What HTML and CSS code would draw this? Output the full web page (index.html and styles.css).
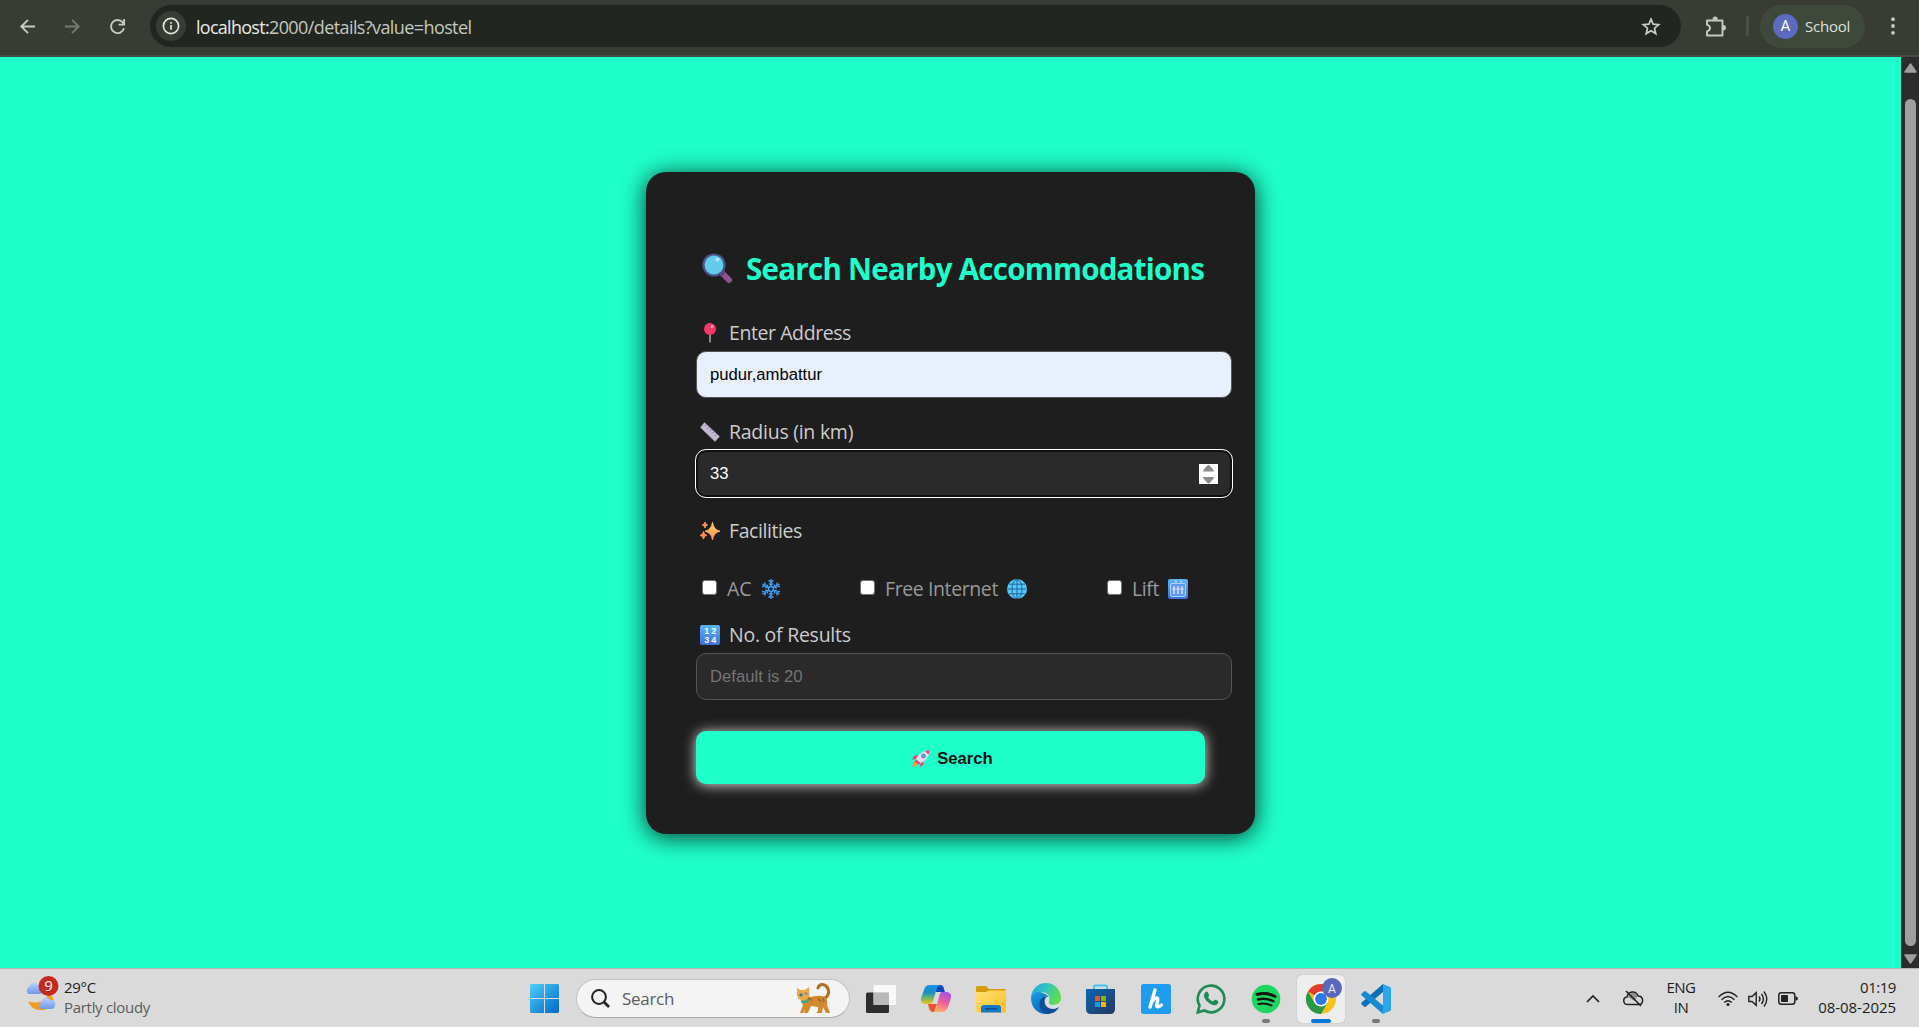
FILE: index.html
```html
<!DOCTYPE html>
<html lang="en">
<head>
<meta charset="utf-8">
<title>Search Nearby Accommodations</title>
<link rel="stylesheet" href="styles.css">
</head>
<body>
<header class="browser-bar">
  <nav class="nav-buttons">
    <svg width="15" height="15" viewBox="0 0 15 15" fill="none" stroke="#c5cbc0" stroke-width="1.9"><path d="M15 7.5H1.5M8 .8 1.3 7.5 8 14.2"/></svg>
    <svg width="15" height="15" viewBox="0 0 15 15" fill="none" stroke="#757a72" stroke-width="1.9"><path d="M0 7.5h13.5M7 .8l6.7 6.7L7 14.2"/></svg>
    <svg width="15" height="15" viewBox="0 0 15 15" fill="none" stroke="#c5cbc0" stroke-width="1.9"><path d="M14 9.2A6.6 6.6 0 1 1 12.6 3.2L14 5.2M14.1 0v5.6H8.6"/></svg>
  </nav>
  <div class="omnibox">
    <span class="site-info"><svg width="18" height="18" viewBox="0 0 18 18" fill="none" stroke="#e0e3dc" stroke-width="1.7"><circle cx="9" cy="9" r="7.6"/><path d="M9 8v4.7M9 5v1.7"/></svg></span>
    <span class="url"><span class="host">localhost:</span><span class="path">2000/details?value=hostel</span></span>
    <svg class="star" width="20" height="19" viewBox="0 0 20 19" fill="none" stroke="#c9cec5" stroke-width="1.7"><path d="m10 2.1 2.1 5 5.6.5-4.2 3.6 1.3 5.4L10 13.7l-4.8 2.9 1.3-5.4-4.2-3.6 5.600-.5z"/></svg>
  </div>
  <svg class="puzzle" width="22" height="21" viewBox="0 0 22 21"><path d="M2 4.500h15.500v15H2v-4.200c4-1 4-5.500 0-6.500z" fill="none" stroke="#c5cbc0" stroke-width="1.900" stroke-linejoin="round"/><path d="M7.500 3.800a2.600 3.300 0 0 1 5.200 0zM18 9a3 2.700 0 0 1 0 5.400z" fill="#c5cbc0"/></svg>
  <span class="divider"></span>
  <div class="profile"><span class="avatar">A</span><span class="profile-name">School</span></div>
  <svg class="kebab" width="4" height="18" viewBox="0 0 4 18" fill="#c5cbc0"><circle cx="2" cy="2.200" r="1.900"/><circle cx="2" cy="9" r="1.900"/><circle cx="2" cy="15.800" r="1.900"/></svg>
</header>

<div class="viewport">
  <main class="page">
    <form class="card">
      <h1 class="title">
        <svg width="30" height="30" viewBox="0 0 30 30"><path d="m20 20 7 7" stroke="#8c5492" stroke-width="6" stroke-linecap="round"/><path d="m18.500 18.500 3 3" stroke="#533a74" stroke-width="4"/><circle cx="12" cy="12" r="10.500" fill="#62cdeb" stroke="#4d5590" stroke-width="2.200"/><circle cx="15.500" cy="6.500" r="2" fill="#b5e4fa"/></svg>
        <span>Search Nearby Accommodations</span>
      </h1>

      <label class="field-label">
        <svg width="20" height="20" viewBox="0 0 20 20"><path d="M10 9v10.500" stroke="#9c8ba5" stroke-width="1.800"/><circle cx="10" cy="6" r="6" fill="#f8366b"/><circle cx="12" cy="3.500" r="1.400" fill="#ffa5c0"/></svg>
        <span>Enter Address</span>
      </label>
      <input class="field autofilled" type="text" value="pudur,ambattur">

      <label class="field-label loose">
        <svg width="20" height="20" viewBox="0 0 20 20"><path d="M4.500.5 19.500 14.500 15 19.500.5 5.500z" fill="#c3b9cd" stroke="#aaa0b8" stroke-width=".6"/><path d="m6.500 2.500-1.500 1.500m4 1-1.500 1.500m4 1L10 9m4 .5L12.500 11m4 1.500L15 14" stroke="#8c62bd" stroke-width="1"/></svg>
        <span>Radius (in km)</span>
      </label>
      <div class="field focused"><span>33</span>
        <svg width="19" height="20" viewBox="0 0 19 20"><path d="M0 0h19v20H0z" fill="#fff"/><path d="M9.500 1c1 0 5.500 5 5.500 6.500H4C4 6 8.500 1 9.500 1zM9.500 19.500c1 0 5.500-5 5.500-6.500H4c0 1.500 4.500 6.500 5.500 6.500z" fill="#8b8b8b"/></svg>
      </div>

      <label class="field-label">
        <svg width="20" height="20" viewBox="0 0 20 20"><defs><linearGradient id="sp" x1="0" y1="0" x2="0" y2="1"><stop offset="0" stop-color="#ffd04e"/><stop offset="1" stop-color="#ff8a6c"/></linearGradient></defs><path d="M12.500 1.500Q13.500 9 20 10.200 13.500 11.500 12.500 19 11.500 11.500 5 10.200 11.500 9 12.500 1.500z" fill="url(#sp)" stroke="url(#sp)" stroke-width="1"/><path d="M5 1q.4 2.700 2.700 3Q5.400 4.300 5 7 4.600 4.300 2.300 4 4.600 3.700 5 1zM3.500 10.500q.5 3.300 3.300 3.800-2.800.5-3.300 3.800-.5-3.300-3.300-3.800 2.800-.5 3.300-3.800z" fill="#ff9258" stroke="#ff9258"/></svg>
        <span>Facilities</span>
      </label>

      <div class="facilities">
        <label class="facility"><i class="box"></i><span class="ac">AC</span>
          <svg width="20" height="20" viewBox="0 0 20 20" fill="none" stroke="#3f9df5" stroke-width="1.400"><g id="arm"><path d="M10 8V0M7.500 1.200l2.500 2.300 2.500-2.300M8 4.500l2 1.700 2-1.700"/></g><use href="#arm" transform="rotate(60 10 10)"/><use href="#arm" transform="rotate(120 10 10)"/><use href="#arm" transform="rotate(180 10 10)"/><use href="#arm" transform="rotate(240 10 10)"/><use href="#arm" transform="rotate(300 10 10)"/><circle cx="10" cy="10" r="2.500"/></svg>
        </label>
        <label class="facility"><i class="box"></i><span>Free Internet</span>
          <svg width="20" height="20" viewBox="0 0 20 20"><circle cx="10" cy="10" r="10" fill="#54c8ff"/><g fill="none" stroke="#1b5a88" stroke-width=".9"><path d="M10 .5v19M.5 10h19M2 5.200h16M2 14.800h16"/><ellipse cx="10" cy="10" rx="5" ry="9.500"/></g></svg>
        </label>
        <label class="facility"><i class="box"></i><span>Lift</span>
          <svg width="20" height="20" viewBox="0 0 20 20"><defs><linearGradient id="bl" x1="0" y1="0" x2="0" y2="1"><stop offset="0" stop-color="#5bb5fa"/><stop offset="1" stop-color="#3d70dc"/></linearGradient></defs><rect width="20" height="20" rx="2" fill="url(#bl)"/><rect x="2.500" y="4.500" width="15" height="13" rx="1.500" fill="#5b9cf0" stroke="#a9d0ff"/><path d="M6 7v8M10 7v8M14 7v8M4.500 10h3M8.500 10h3M12.500 10h3M7 2.500h2M12 2.500h2" stroke="#dcd9ff" stroke-width="1.500"/></svg>
        </label>
      </div>

      <label class="field-label loose">
        <svg width="20" height="20" viewBox="0 0 20 20"><rect width="20" height="20" rx="2" fill="url(#bl)"/><g class="digits"><text x="4.300" y="8.800">1</text><text x="11.300" y="8.800">2</text><text x="4.300" y="17.800">3</text><text x="11.300" y="17.800">4</text></g></svg>
        <span>No. of Results</span>
      </label>
      <input class="field results" type="text" placeholder="Default is 20">

      <button class="search-button" type="button">
        <svg width="18" height="17" viewBox="0 0 18 17"><path d="m6 5-4 1-2 3.500 4-.5M12 11l-1 4-3 2 .5-4z" fill="#ee3d70"/><path d="M3 11c-2 1-2.500 4-2.500 6 2 0 4-1 5-3z" fill="#ff9440"/><path d="M17.500.3C12 .3 6.500 4 3.500 10.500L7.500 14C14 11 17.500 6 17.500.3z" fill="#e7dfee"/><path d="M17.500.3q-2.500 0-4.500 1l3.500 3.200q1-2 1-4.200zM4.200 9.200l4.500 4-2 1.300L3 11.500z" fill="#e8416f"/><circle cx="11.500" cy="6" r="2" fill="#67a6f0" stroke="#5873a8" stroke-width=".8"/></svg>
        <span>Search</span>
      </button>
    </form>
  </main>
  <aside class="scrollbar">
    <svg width="13" height="10" viewBox="0 0 13 10"><path d="M6.500 1 12 9H1z" fill="#9f9f9f" stroke="#9f9f9f" stroke-linejoin="round" stroke-width="1.500"/></svg>
    <span class="thumb"></span>
    <svg width="13" height="10" viewBox="0 0 13 10"><path d="M6.500 9 12 1H1z" fill="#9f9f9f" stroke="#9f9f9f" stroke-linejoin="round" stroke-width="1.500"/></svg>
  </aside>
</div>

<footer class="taskbar">
  <div class="weather">
    <svg width="34" height="35" viewBox="0 0 34 35"><defs><linearGradient id="cl" x1="0" y1="0" x2="0" y2="1"><stop offset="0" stop-color="#b9d3fb"/><stop offset="1" stop-color="#6f98e6"/></linearGradient></defs><path d="M23 19c5 0 6 4 5 8-3 6-9 8-14 7-5 0-9-4-11-9 6 3 16 2 20-6z" fill="#f39a1f"/><path d="M4 18a3.800 3.800 0 0 1 0-7c1-5 7-6 9-2 4-1 6 3 5 6-.3 2-2 3-4 3z" fill="url(#cl)"/><path d="M16 33a3.800 3.800 0 0 1 0-7c1-5 7-6 9-2 4-1 6 3 5 6-.3 2-2 3-4 3z" fill="url(#cl)"/><circle cx="23.500" cy="10" r="10" fill="#c42b1c"/><text class="count" x="23.500" y="15.300">9</text></svg>
    <div class="weather-text"><span>29°C</span><span class="muted">Partly cloudy</span></div>
  </div>
  <svg class="start" width="29" height="29" viewBox="0 0 29 29"><defs><linearGradient id="wn" x1="0" y1="0" x2="1" y2="1"><stop offset="0" stop-color="#4cd0fb"/><stop offset="1" stop-color="#0067c9"/></linearGradient></defs><path d="M1 0h13v14H0V1zM15 0h13l1 1v13H15zM0 15h14v14H1l-1-1zM15 15h14v13l-1 1H15z" fill="url(#wn)"/></svg>
  <div class="search-pill">
    <svg width="19" height="19" viewBox="0 0 19 19" fill="none" stroke="#222" stroke-width="2"><circle cx="8" cy="8" r="6.900"/><path d="m13 13 5 5" stroke-width="2.600"/></svg>
    <span class="pill-text">Search</span>
    <svg class="cat" width="37" height="31" viewBox="0 0 37 31"><path d="M29 16c6-2 7-8 4-12-3-4-8-3-9 1" fill="none" stroke="#b46e1d" stroke-width="3" stroke-linecap="round"/><path d="M10 14c6 1 12-2 18-1 5 1 6 5 5 9l3 8h-4l-3-6-1 6h-6l2-2v-4l-7-1-3 7h-4l1-4-2 4H6l3-8c-2-3-2-6 1-8z" fill="#d28a2e"/><path d="M3 4.500 6 7h5l4-3 .5 8c0 4-4 5.500-7 5-4 0-6-2.500-5.500-5z" fill="#efa847"/><path d="m14 15 4 2M24 15l3 4M29 15l1 4" stroke="#a8651a" stroke-width="1.500"/><circle cx="7" cy="12" r="1.700" fill="#367e9d"/><circle cx="12" cy="10.500" r="1.300" fill="#4b9aae"/><path d="M7 18q5 3 8-2" fill="none" stroke="#22aaa3" stroke-width="1.800"/><path d="m0 13 4 1M0 16l4-1" stroke="#fff"/></svg>
  </div>
  <div class="apps">
    <span class="app"><svg width="30" height="30" viewBox="0 0 30 30"><rect y="8.500" width="23" height="20.500" rx="1.500" fill="#2d2d2d"/><rect x="7.500" y="1" width="22.500" height="20" rx="1.500" fill="#fff" fill-opacity=".82"/><path d="M7.500 8.500H23V21H7.500z" fill="#b9b9b9"/></svg></span>
    <span class="app"><svg width="30" height="30" viewBox="0 0 30 30"><defs><linearGradient id="c1" x1=".3" y1="0" x2=".3" y2="1"><stop offset="0" stop-color="#1593e8"/><stop offset=".4" stop-color="#188fc5"/><stop offset=".7" stop-color="#73b763"/><stop offset="1" stop-color="#f2c318"/></linearGradient><linearGradient id="c2" x1=".7" y1="0" x2=".4" y2="1"><stop offset="0" stop-color="#a551e8"/><stop offset=".5" stop-color="#ec5d9c"/><stop offset="1" stop-color="#ffab6b"/></linearGradient></defs><path d="M14 1h6q2 0 3 4l1 3h-9z" fill="#1745bd"/><path d="M7 20h9l-3 8h-1q-3 0-4-4z" fill="#ee5330"/><path d="M9 1h10q-3 1-4 6l-3 10q-1 3-4 3H4q-5-1-4-6l3-8q1-5 6-5z" fill="url(#c1)"/><path d="M21 8h5q5 1 4 6l-3 9q-2 5-6 5h-9q2 0 3-4l3-11q1-5 3-5z" fill="url(#c2)"/></svg></span>
    <span class="app"><svg width="30" height="30" viewBox="0 0 30 30"><defs><linearGradient id="fo" x1="0" y1="0" x2="1" y2="1"><stop offset="0" stop-color="#ffe078"/><stop offset="1" stop-color="#fcbd22"/></linearGradient></defs><path d="M0 3.500Q0 2 1.500 2H10l3 3h15.500Q30 5 30 6.500V10H0z" fill="#d99b0b"/><path d="M0 8h10l3-1.500h17V27.500q0 1-1 1H1q-1 0-1-1z" fill="url(#fo)"/><path d="M5 28.500V24q0-3 3-3h14q3 0 3 3v4.500z" fill="#1478c8"/><path d="M9 24.800h12" stroke="#0a4f91" stroke-width="1.500"/></svg></span>
    <span class="app"><svg width="30" height="30" viewBox="0 0 30 30"><defs><linearGradient id="e1" x1="0" y1="0" x2="1" y2=".4"><stop offset="0" stop-color="#1ba5de"/><stop offset=".5" stop-color="#2fc4c4"/><stop offset="1" stop-color="#5fdc4e"/></linearGradient><linearGradient id="e2" x1="0" y1="0" x2=".7" y2="1"><stop offset="0" stop-color="#1b9de2"/><stop offset="1" stop-color="#075db5"/></linearGradient></defs><path d="M0 14A15 15 0 0 1 30 14c0 5-4 7-8 7-3 0-5-1-4-3 2-6-2-10-8-10-5 0-8 3-10 6z" fill="url(#e1)"/><path d="M0 14C2 8 8 7 12 9c3 1 5 3 5 4-6-1-6 9-1 12 4 3 9 1 12-2C25 28 20 30 15 30 7 30 0 24 0 14z" fill="url(#e2)"/><path d="M12 13c-6 5-4 14 3 17 6 0 10-2 13-7-3 2-8 3-12 0-3-3-3-7-1-10z" fill="#0c4f96"/><path d="M18 18c-1 2 1 3 4 3 3 0 6-1 7-3-1 3-2 5-3 6-5 2-12-2-11-7 0-3 3-4 3 1z" fill="#d9dfe2"/></svg></span>
    <span class="app"><svg width="30" height="30" viewBox="0 0 30 30"><defs><linearGradient id="st" x1="0" y1="0" x2="1" y2="1"><stop offset="0" stop-color="#0a67b5"/><stop offset="1" stop-color="#26365f"/></linearGradient></defs><path d="M8 7V3q0-1.500 1.500-1.500h10Q21 1.500 21 3v4" fill="none" stroke="#40c6ef" stroke-width="2"/><path d="M0 5h29v20q0 5-5 5H5q-5 0-5-5z" fill="url(#st)"/><path d="M9 12h5v5H9z" fill="#f25022"/><path d="M15 12h5v5h-5z" fill="#7fba00"/><path d="M9 18h5v5H9z" fill="#00a4ef"/><path d="M15 18h5v5h-5z" fill="#ffb900"/></svg></span>
    <span class="app"><svg width="30" height="30" viewBox="0 0 30 30"><rect width="30" height="30" rx="2.500" fill="#1f9bf0"/><path d="M14 6q-2 7-5 17M9.500 21q3-7 6-7c3 0 0 6 0 8q1 2 5-1" fill="none" stroke="#fff" stroke-width="3.400" stroke-linecap="round" stroke-linejoin="round"/></svg></span>
    <span class="app"><svg width="30" height="30" viewBox="0 0 30 30"><path d="M1.800 28.300 3.500 21.500A13.300 13.300 0 1 1 8.500 26.500z" fill="none" stroke="#1f8b54" stroke-width="2.600"/><path d="M10 8q1-1 2 .5l1 2.500q.3 1-1 2.200 2 3.300 5 4.300l1.500-1.700q.7-.5 3.500 1.200 1 1-.5 3-2.500 2.500-7 0Q9 16.500 8 12.500q-.5-3 2-4.500z" fill="#1f8b54"/></svg></span>
    <span class="app running"><svg width="30" height="30" viewBox="0 0 30 30"><circle cx="15" cy="15" r="14.300" fill="#1ed760"/><g fill="none" stroke="#101510" stroke-linecap="round"><path d="M6 10.500q10-2.500 18 2" stroke-width="3"/><path d="M7 15.500q8-2 15.500 1.800" stroke-width="2.400"/><path d="M7.500 20q7-1.500 13 1.500" stroke-width="2"/></g></svg></span>
    <span class="app active"><svg width="36" height="36" viewBox="0 -6 36 36"><circle cx="15" cy="15" r="15" fill="#fbc116"/><path d="M15 15 2 7.500A15 15 0 0 1 28 7.500H15z" fill="#e33b2e"/><path d="M2 7.500A15 15 0 0 0 15 30l6.500-11.300L15 15 8.500 18.700z" fill="#279847"/><circle cx="15" cy="15" r="7.500" fill="#fff"/><circle cx="15" cy="15" r="5.900" fill="#2f78ec"/><circle cx="26" cy="4" r="10" fill="#5b67b8"/><text class="badge-letter" x="26" y="8.500">A</text></svg></span>
    <span class="app running"><svg width="30" height="30" viewBox="0 0 30 30"><path d="M22 0v8L5 22.500q-1 .8-2 0L.7 20.500q-1-1 0-2z" fill="#0871b8"/><path d="M.7 11.500q-1-1 0-2L3 7.500q1-.8 2 0L22 21.500V30z" fill="#168bd2"/><path d="M22 0l7 3q1 .5 1 1.500v21q0 1-1 1.500l-7 3q-1 0-1.500-1L22 27z" fill="#2ba5ee"/></svg></span>
  </div>
  <div class="tray">
    <svg width="14" height="9" viewBox="0 0 14 9" fill="none" stroke="#222" stroke-width="1.700"><path d="M1 8l6-6 6 6"/></svg>
    <svg class="cloud" width="21" height="17" viewBox="0 0 21 17"><path d="M5 14.500C-.5 14.500-.5 7.500 4 7 5 1 13 0 15 6c6 0 6 8.500 1 8.500z" fill="#d9d9d9" stroke="#222" stroke-width="1.500"/><path d="M5 7c1-5 8-5 9.500-1l-3 5z" fill="#8e8e8e"/><path d="M3 1l15 15" stroke="#222" stroke-width="1.600"/></svg>
    <div class="lang"><span>ENG</span><span>IN</span></div>
    <svg class="wifi" width="20" height="16" viewBox="0 0 20 16" fill="none" stroke="#222" stroke-width="1.400"><path d="M.7 6q9.300-9.500 18.600 0M3.500 8.800q6.500-6.500 13 0M6.300 11.600q3.700-3.700 7.400 0"/><circle cx="10" cy="13.600" r="1.500" fill="#222" stroke="none"/></svg>
    <svg class="sound" width="20" height="18" viewBox="0 0 20 18" fill="none" stroke="#222" stroke-width="1.400"><path d="M.8 6.500v5H4l4.200 3.800V2.700L4 6.500zM11 6.500q2 2.500 0 5M13.500 4q3.800 5 0 10M16 1.500q5.500 7.500 0 15"/></svg>
    <svg class="battery" width="20" height="13" viewBox="0 0 20 13"><rect x=".8" y=".8" width="16" height="11.400" rx="2.500" fill="none" stroke="#222" stroke-width="1.500"/><rect x="3" y="3" width="7" height="7" rx=".8" fill="#222"/><path d="M17.500 4.200q2.500.5 2.500 2.300t-2.500 2.300z" fill="#222"/></svg>
    <div class="clock"><span class="time">01:19</span><span class="date">08-08-2025</span></div>
  </div>
</footer>
</body>
</html>
```
FILE: styles.css
```css
* { box-sizing: border-box; }
body {
  margin: 0;
  width: 1919px;
  height: 1027px;
  overflow: hidden;
  display: flex;
  flex-direction: column;
  font-family: "Open Sans", "Noto Sans", sans-serif;
  font-size: 15px;
  white-space: nowrap;
}
svg { display: block; flex: none; overflow: visible; }

/* Browser toolbar */
.browser-bar {
  height: 57px;
  flex: none;
  display: flex;
  align-items: center;
  padding: 0 24px 3px 20px;
  background: #383c35;
  border-bottom: 2px solid #464a44;
}
.nav-buttons { display: flex; gap: 30px; width: 130px; }
.omnibox {
  width: 1531px;
  height: 42px;
  display: flex;
  align-items: center;
  padding: 0 20px 0 6px;
  border-radius: 21px;
  background: #222620;
}
.site-info {
  width: 30px;
  height: 30px;
  display: grid;
  place-items: center;
  border-radius: 50%;
  background: #383c35;
}
.url { display: flex; margin-left: 10px; padding-top: 2px; font-size: 18px; line-height: 26px; }
.host { color: #e9ece5; letter-spacing: -.72px; }
.path { color: #c4c8bf; letter-spacing: -.59px; }
.star { margin-left: auto; }
.puzzle { margin-left: 24px; }
.divider { width: 3px; height: 20px; margin: 0 11px 0 19px; border-radius: 2px; background: #4b5148; }
.profile {
  width: 105px;
  height: 43px;
  display: flex;
  align-items: center;
  gap: 7px;
  padding-left: 13px;
  border-radius: 22px;
  background: #3e493c;
  color: #dce3d6;
}
.profile-name { letter-spacing: -.24px; }
.avatar {
  width: 25px;
  height: 25px;
  border-radius: 50%;
  background: #5c6bc0;
  color: #fff;
  font-family: Roboto, sans-serif;
  line-height: 25px;
  text-align: center;
}
.kebab { margin-left: auto; }

/* Page */
.viewport { height: 911px; flex: none; display: flex; }
.page { width: 1901px; padding-top: 115px; background: #1fffcb; }
.card {
  width: 609px;
  height: 662px;
  margin: 0 auto;
  padding: 76px 50px 50px;
  border-radius: 20px;
  background: #1e1e1e;
  box-shadow: 0 3px 25px rgba(0, 0, 0, .8);
}
.title {
  display: flex;
  align-items: center;
  gap: 14px;
  height: 40px;
  margin: 0 0 32px;
  padding-left: 6px;
  color: #1fffcb;
  font-size: 29.5px;
  letter-spacing: -.73px;
  line-height: 41px;
}
.field-label {
  display: flex;
  align-items: center;
  gap: 9px;
  height: 26px;
  margin: 0 0 5px;
  padding-left: 4px;
  color: #ccc;
  font-size: 19.5px;
  letter-spacing: -.42px;
  line-height: 26px;
}
.field-label.loose { letter-spacing: -.26px; }
.field {
  display: flex;
  align-items: center;
  justify-content: space-between;
  width: 536px;
  height: 47px;
  margin: 0 0 21px;
  padding: 0 14px 0 13px;
  border: 1px solid #555;
  border-radius: 10px;
  background: #2a2a2a;
  color: #fff;
  font: 16.67px "Liberation Sans", Arial, sans-serif;
}
.field::placeholder { color: #757575; opacity: 1; }
.autofilled { background: #e8f0fe; color: #000; }
.focused { border: 2px solid #101010; outline: 1px solid #fff; padding-left: 12px; padding-right: 12px; }
.facilities { display: flex; height: 26px; margin: 32px 0 20px; padding-left: 6px; }
.facility {
  display: flex;
  align-items: center;
  gap: 10px;
  color: #999;
  font-size: 19.5px;
  letter-spacing: -.4px;
  line-height: 26px;
}
.facility svg { margin-left: -1px; }
.facility:nth-child(1) { width: 158px; }
.facility:nth-child(2) { width: 247px; }
.ac { letter-spacing: 0; }
.box {
  width: 15px;
  height: 15px;
  margin-bottom: 3px;
  border: 1px solid #767676;
  border-radius: 3px;
  background: #fff;
}
.digits { fill: #fff; font: bold 9px "Liberation Sans", sans-serif; letter-spacing: 0; }
.results { margin-bottom: 31px; }
.search-button {
  display: flex;
  align-items: center;
  justify-content: center;
  gap: 7px;
  width: 509px;
  height: 53px;
  padding: 2px 3px 0 7px;
  border: 0;
  border-radius: 10px;
  background: #1fffcb;
  box-shadow: 0 1px 13px rgba(255, 255, 255, .85);
  color: #121212;
  font: bold 16.67px "Liberation Sans", Arial, sans-serif;
}
.scrollbar {
  width: 18px;
  display: flex;
  flex-direction: column;
  align-items: center;
  padding: 6px 0 4px;
  background: #2c2c2c;
}
.thumb { width: 11px; height: 847px; margin: 26px 0 8px; border-radius: 6px; background: #9f9f9f; }

/* Taskbar */
.taskbar {
  height: 59px;
  flex: none;
  display: flex;
  align-items: center;
  padding: 1px 23px 0 25px;
  border-top: 1px solid #b5b5b5;
  background: #dadada;
  color: #1c1c1c;
  line-height: 20px;
}
.weather { display: flex; align-items: center; width: 505px; gap: 5px; }
.weather > svg { margin-bottom: 10px; }
.weather-text { display: flex; flex-direction: column; padding-bottom: 3px; letter-spacing: -.3px; }
.muted { color: #5c5c5c; }
.count { fill: #fff; font: 15px "Open Sans", sans-serif; text-anchor: middle; }
.search-pill {
  display: flex;
  align-items: center;
  width: 274px;
  height: 39px;
  margin-left: 17px;
  padding: 0 18px 0 14px;
  border: 1px solid #c3c3c3;
  border-bottom-color: #aaa;
  border-radius: 20px;
  background: #f4f4f4;
  color: #5c5c5c;
  font-size: 17px;
}
.pill-text { margin-left: 12px; letter-spacing: -.3px; }
.cat { margin-left: auto; }
.apps { display: flex; gap: 7px; margin-left: 7px; }
.app { position: relative; width: 48px; height: 48px; display: grid; place-items: center; }
.running::after, .active::after {
  content: "";
  position: absolute;
  bottom: 0;
  left: 20px;
  width: 8px;
  height: 4px;
  border-radius: 2px;
  background: #777;
}
.active { border-radius: 5px; background: #eee; box-shadow: 0 0 1px #999; }
.active svg { margin: -6px 0 0 6px; }
.active::after { left: 14px; width: 20px; background: #0a78d4; }
.badge-letter { fill: #e8eaf8; font: 12px Roboto, sans-serif; text-anchor: middle; }
.tray { display: flex; align-items: center; margin-left: auto; }
.cloud { margin-left: 23px; }
.lang { display: flex; flex-direction: column; align-items: center; width: 30px; margin-left: 22px; padding-bottom: 3px; letter-spacing: -.5px; }
.wifi { margin-left: 22px; }
.sound { margin-left: 10px; }
.battery { margin-left: 10px; }
.clock { display: flex; flex-direction: column; align-items: flex-end; width: 98px; padding-bottom: 3px; }
.time { letter-spacing: -.45px; }
.date { letter-spacing: -.05px; }
```
